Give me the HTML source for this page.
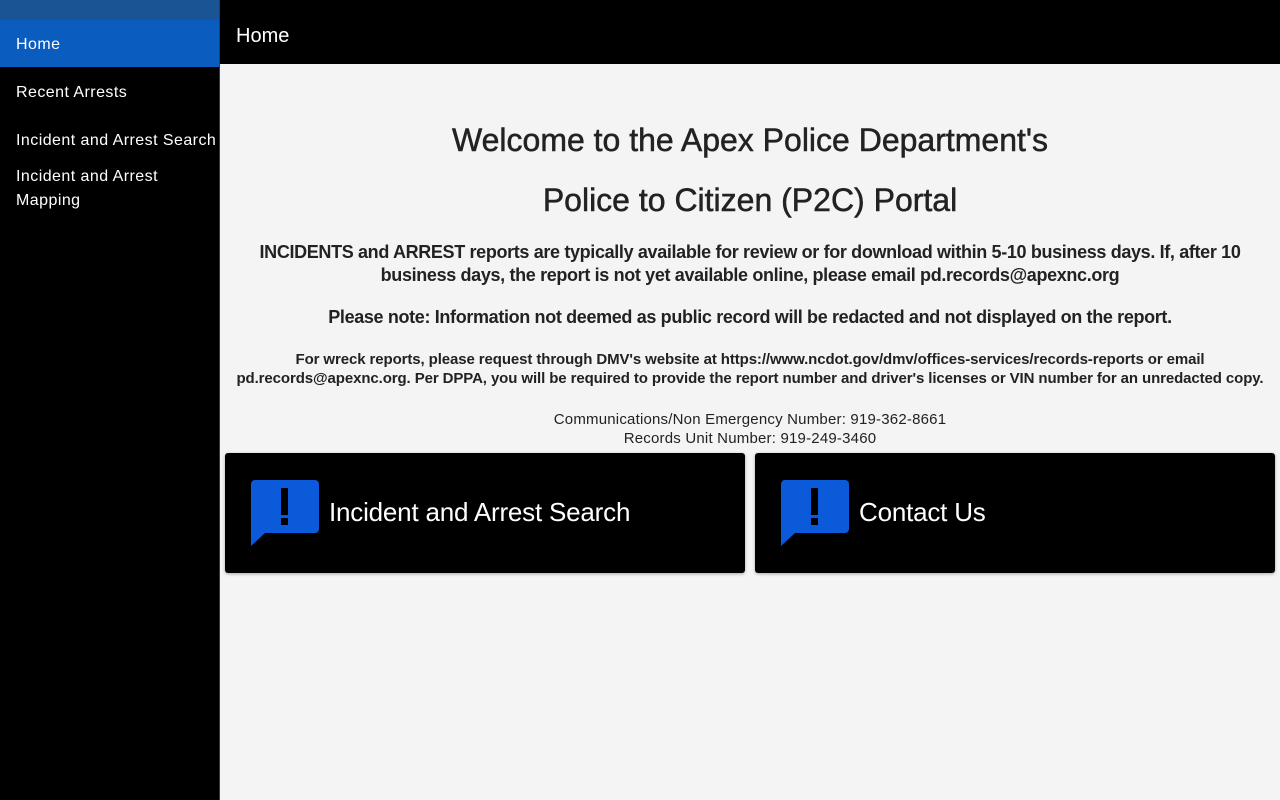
<!DOCTYPE html>
<html><head><meta charset="utf-8"><style>
*{margin:0;padding:0;box-sizing:border-box}
body{width:1280px;height:800px;overflow:hidden;background:#f4f4f4;font-family:"Liberation Sans",Roboto,sans-serif;color:#222;position:relative}
.side{position:absolute;left:0;top:0;width:220px;height:800px;background:#000;border-right:1px solid #1a3c80}
.side .top{height:20px;background:#1a5494}
.side a{display:block;color:#fff;font-size:16px;text-decoration:none;padding:0 16px;letter-spacing:0.45px}
.home{background:#0b5cbf;height:47px;line-height:50px}
.hdr{position:absolute;left:220px;top:0;right:0;height:64px;background:#000;color:#fff;font-size:20px;padding-left:16px;line-height:73px}
.main{position:absolute;left:220px;top:64px;right:0;text-align:center}
h1{font-size:32px;font-weight:normal;-webkit-text-stroke:0.5px #222;line-height:60px}
.p1{font-size:18px;font-weight:bold;line-height:23px;padding:0 36px;letter-spacing:-0.35px}
.p3{font-size:15px;font-weight:bold;line-height:19px;letter-spacing:-0.1px;padding:0 10px}
.p4{font-size:15px;line-height:19px;letter-spacing:0.2px}
.card{position:absolute;top:453px;width:520px;height:120px;background:#000;border-radius:3px;box-shadow:0 1px 3px rgba(0,0,0,.3);color:#fff;font-size:26px;letter-spacing:-0.2px}
.card svg{position:absolute;left:26px;top:27px}
.card span{position:absolute;left:104px;top:44px}
</style></head><body>
<div class="side"><div class="top"></div>
<a class="home">Home</a>
<a style="margin-top:16px;line-height:20px">Recent Arrests</a>
<a style="margin-top:28px;line-height:20px;padding-right:0;white-space:nowrap">Incident and Arrest Search</a>
<a style="margin-top:14px;line-height:24px">Incident and Arrest<br>Mapping</a>
</div>
<div class="hdr">Home</div>
<div class="main">
<h1 style="margin-top:46px">Welcome to the Apex Police Department's</h1>
<h1>Police to Citizen (P2C) Portal</h1>
<p class="p1" style="margin-top:11px">INCIDENTS and ARREST reports are typically available for review or for download within 5-10 business days. If, after 10 business days, the report is not yet available online, please email pd.records@apexnc.org</p>
<p class="p1" style="margin-top:19px">Please note: Information not deemed as public record will be redacted and not displayed on the report.</p>
<p class="p3" style="margin-top:21px">For wreck reports, please request through DMV's website at https://www.ncdot.gov/dmv/offices-services/records-reports or email pd.records@apexnc.org. Per DPPA, you will be required to provide the report number and driver's licenses or VIN number for an unredacted copy.</p>
<p class="p4" style="margin-top:22px">Communications/Non Emergency Number: 919-362-8661<br>Records Unit Number: 919-249-3460</p>
</div>
<div class="card" style="left:225px"><svg width="68" height="67" viewBox="0 0 68 67"><path d="M4 0H64a4 4 0 0 1 4 4V49a4 4 0 0 1-4 4H14L0 66V4a4 4 0 0 1 4-4z" fill="#0b5ad9"/><rect x="30" y="8" width="7" height="27" fill="#000"/><rect x="30" y="38" width="7" height="7" fill="#000"/></svg><span>Incident and Arrest Search</span></div>
<div class="card" style="left:755px"><svg width="68" height="67" viewBox="0 0 68 67"><path d="M4 0H64a4 4 0 0 1 4 4V49a4 4 0 0 1-4 4H14L0 66V4a4 4 0 0 1 4-4z" fill="#0b5ad9"/><rect x="30" y="8" width="7" height="27" fill="#000"/><rect x="30" y="38" width="7" height="7" fill="#000"/></svg><span>Contact Us</span></div>
</body></html>
